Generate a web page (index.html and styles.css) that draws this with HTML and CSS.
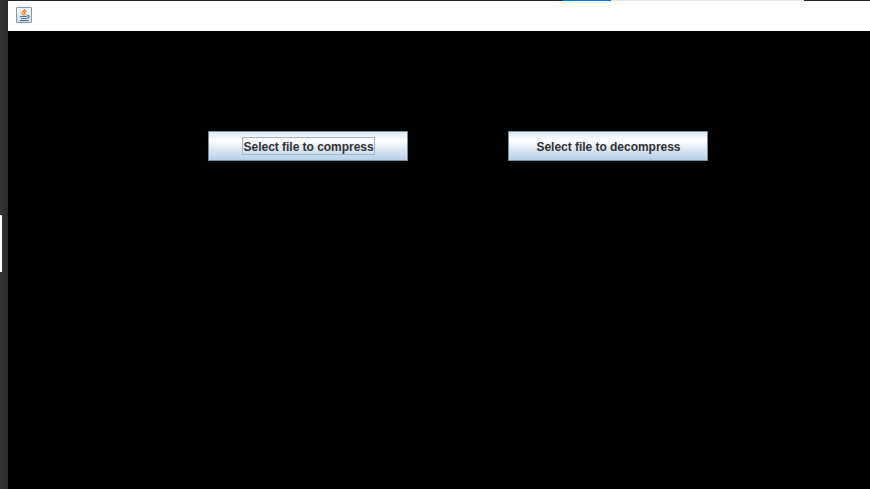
FILE: index.html
```html
<!DOCTYPE html>
<html lang="en">
<head>
<meta charset="utf-8">
<title>File compressor</title>
<link rel="stylesheet" href="styles.css">
</head>
<body>
<div class="desktop">
  <aside class="edge"><span class="edge-marker"></span></aside>
  <div class="window">
    <div class="top-line"></div>
    <header class="titlebar">
      <svg class="java-icon" width="16" height="16" viewBox="0 0 16 16">
        <defs>
          <linearGradient id="tile" x1="0" y1="0" x2="0" y2="1">
            <stop offset="0" stop-color="#f4f7fa"/>
            <stop offset="1" stop-color="#cbd8e3"/>
          </linearGradient>
        </defs>
        <rect x=".5" y=".5" width="15" height="15" rx=".5" fill="url(#tile)" stroke="#7f9bb0"/>
        <path d="M9 2C9.2 4 5.7 4.5 6.2 6.4C6.4 7.4 7.3 7.6 7.7 8.4M10.9 4C8.5 4.9 8 5.8 8.9 6.7C9.4 7.4 9 7.8 8.5 8.4" fill="none" stroke="#ed7c1c" stroke-width="1.3"/>
        <path d="M4 9.5H11M5 11.5H10.5M11 8.7C14 8.2 13.7 10.9 11 11.3M4 13.5H12.5" fill="none" stroke="#49779c" stroke-width="1.1"/>
      </svg>
    </header>
    <main class="content">
      <button class="metal-button"><span class="label focused">Select file to compress</span></button>
      <button class="metal-button"><span class="label">Select file to decompress</span></button>
    </main>
  </div>
</div>
</body>
</html>
```
FILE: styles.css
```css
* { box-sizing: border-box; }
body { margin: 0; background: #000; overflow: hidden; }
.desktop { display: flex; height: 489px; }
.edge {
  flex: 0 0 8px;
  padding-top: 215px;
  background: linear-gradient(90deg, #343434, #292929);
}
.edge-marker { display: block; width: 2px; height: 57px; background: #fff; }
.window { flex: 1; display: flex; flex-direction: column; }
.top-line {
  height: 1px;
  background: linear-gradient(90deg, #272727 555px, #0078d7 555px 603px, #e5e5e5 603px 796px, #272727 796px);
}
.titlebar { height: 30px; padding: 6px 8px; background: #fff; }
.java-icon { display: block; }
.content {
  flex: 1;
  display: flex;
  align-items: flex-start;
  gap: 100px;
  padding: 100px 0 0 200px;
  background: #000;
}
.metal-button {
  display: flex;
  align-items: center;
  justify-content: center;
  width: 200px;
  height: 30px;
  margin: 0;
  padding: 0 0 0 1px;
  border: 1px solid #7a8a99;
  border-radius: 0;
  background: linear-gradient(#dde8f3 0%, #fff 30%, #dde8f3 60%, #b8cfe5 100%);
  color: #333;
  font: bold 12px/16px "Liberation Sans", Arial, sans-serif;
  letter-spacing: -0.03px;
}
.label {
  height: 18px;
  padding: 1px 1px 0;
  border: 1px solid transparent;
  line-height: 16px;
  white-space: nowrap;
}
.focused { width: 133px; padding-left: 0.6px; border-color: #a3b8cc; }
```
